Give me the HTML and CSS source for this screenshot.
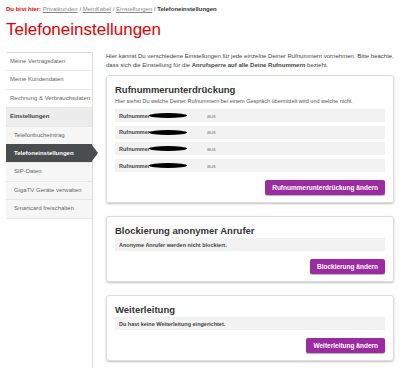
FILE: index.html
```html
<!DOCTYPE html>
<html lang="de">
<head>
    <meta charset="UTF-8">
    <meta name="viewport" content="width=device-width, initial-scale=1.0">
    <title>Telefoneinstellungen</title>
    <link rel="stylesheet" href="styles.css">
</head>
<body>

<div class="breadcrumb">
    <span class="here">Du bist hier:</span>
    <a href="#">Privatkunden</a> /
    <a href="#">MeinKabel</a> /
    <a href="#">Einstellungen</a> /
    <strong>Telefoneinstellungen</strong>
</div>

<h1>Telefoneinstellungen</h1>

<div class="main">
    <ul class="sidebar">
        <li>Meine Vertragsdaten</li>
        <li>Meine Kundendaten</li>
        <li>Rechnung &amp; Verbrauchsdaten</li>
        <li class="section">Einstellungen</li>
        <li class="sub">Telefonbucheintrag</li>
        <li class="sub active">Telefoneinstellungen</li>
        <li class="sub">SIP-Daten</li>
        <li class="sub">GigaTV Geräte verwalten</li>
        <li class="sub">Smartcard freischalten</li>
    </ul>

    <div class="content">
        <p class="intro">Hier kannst Du verschiedene Einstellungen für jede einzelne Deiner Rufnummern vornehmen. Bitte beachte,<br>dass sich die Einstellung für die <b>Anrufsperre auf alle Deine Rufnummern</b> bezieht.</p>

        <div class="card">
            <h2>Rufnummerunterdrückung</h2>
            <p class="desc">Hier siehst Du welche Deiner Rufnummern bei einem Gespräch übermittelt wird und welche nicht.</p>
            <div class="row"><span class="label">Rufnummer<span class="blot"></span></span><span class="value">aus</span></div>
            <div class="row"><span class="label">Rufnummer<span class="blot"></span></span><span class="value">aus</span></div>
            <div class="row"><span class="label">Rufnummer<span class="blot"></span></span><span class="value">aus</span></div>
            <div class="row"><span class="label">Rufnummer<span class="blot"></span></span><span class="value">aus</span></div>
            <div class="actions"><button>Rufnummerunterdrückung ändern</button></div>
        </div>

        <div class="card">
            <h2>Blockierung anonymer Anrufer</h2>
            <div class="row info">Anonyme Anrufer werden nicht blockiert.</div>
            <div class="actions"><button>Blockierung ändern</button></div>
        </div>

        <div class="card">
            <h2>Weiterleitung</h2>
            <div class="row info">Du hast keine Weiterleitung eingerichtet.</div>
            <div class="actions"><button>Weiterleitung ändern</button></div>
        </div>
    </div>
</div>

</body>
</html>
```

FILE: styles.css
```css
body {
    font-family: 'Liberation Sans', Arial, sans-serif;
    margin: 0;
    padding: 5px 6px 0;
    background-color: white;
    color: #333;
    height: 363px;
    overflow: hidden;
    display: flex;
    flex-direction: column;
}
.breadcrumb {
    font-size: 6px;
    line-height: 8px;
    color: #666;
}
.breadcrumb .here {
    color: #e60000;
    font-weight: bold;
}
.breadcrumb a {
    color: #888;
}
.breadcrumb strong {
    color: #333;
}
h1 {
    font-size: 17px;
    font-weight: normal;
    color: #e60000;
    margin: 5px 0 0;
    line-height: 24px;
}
.main {
    display: flex;
    margin-top: 10px;
    flex: 1;
}
.sidebar {
    list-style: none;
    margin: 0;
    padding: 0;
    width: 86px;
    border-right: 1px solid #ddd;
    flex-shrink: 0;
}
.sidebar li {
    font-size: 6px;
    color: #666;
    height: 17.4px;
    line-height: 17.4px;
    padding-left: 4px;
    border-top: 1px solid #e6e6e6;
    position: relative;
    white-space: nowrap;
}
.sidebar li:first-child {
    border-top-color: #ddd;
}
.sidebar li:last-child {
    border-bottom: 1px solid #e6e6e6;
}
.sidebar .section {
    background-color: #ececec;
    font-weight: bold;
    color: #444;
}
.sidebar .sub {
    background-color: #f6f6f6;
    padding-left: 8px;
}
.sidebar .active {
    background-color: #4a4d4e;
    color: white;
    font-weight: bold;
    border-top-color: #4a4d4e;
}
.sidebar .active::after {
    content: "";
    position: absolute;
    right: -6px;
    top: 0;
    border-top: 8.7px solid transparent;
    border-bottom: 8.7px solid transparent;
    border-left: 6px solid #4a4d4e;
}
.content {
    margin-left: 13px;
    width: 288px;
}
.intro {
    font-size: 6px;
    line-height: 8.5px;
    margin: 0 0 6px;
    color: #444;
    white-space: nowrap;
}
.card {
    border: 1px solid #ddd;
    border-radius: 3px;
    box-shadow: 0 1px 2px rgba(0, 0, 0, 0.25);
    padding: 8px 8px 7px;
    margin-bottom: 13px;
}
h2 {
    font-size: 9.5px;
    line-height: 12px;
    margin: 0 0 1px;
    color: #333;
}
.desc {
    font-size: 5.5px;
    line-height: 8px;
    color: #555;
    margin: 1px 0 4px;
}
.row {
    background-color: #f2f2f2;
    height: 13px;
    margin-top: 3.7px;
    display: flex;
    align-items: center;
    font-size: 5.5px;
    font-weight: bold;
    color: #444;
    padding-left: 4px;
}
.row.info {
    margin-top: 1px;
}
.row .label {
    width: 88px;
    display: flex;
    align-items: center;
}
.blot {
    display: inline-block;
    width: 38px;
    height: 5px;
    background-color: #000;
    border-radius: 50%;
    margin-left: -1px;
}
.row .value {
    font-weight: normal;
    color: #888;
}
.actions {
    display: flex;
    justify-content: flex-end;
    margin-top: 8px;
}
button {
    background-color: #9c2aa0;
    color: white;
    border: none;
    border-radius: 2px;
    height: 15px;
    padding: 0 7px;
    font-family: inherit;
    font-size: 6.5px;
    font-weight: bold;
    box-shadow: 0 1px 1px rgba(0, 0, 0, 0.3);
    cursor: pointer;
}
```
